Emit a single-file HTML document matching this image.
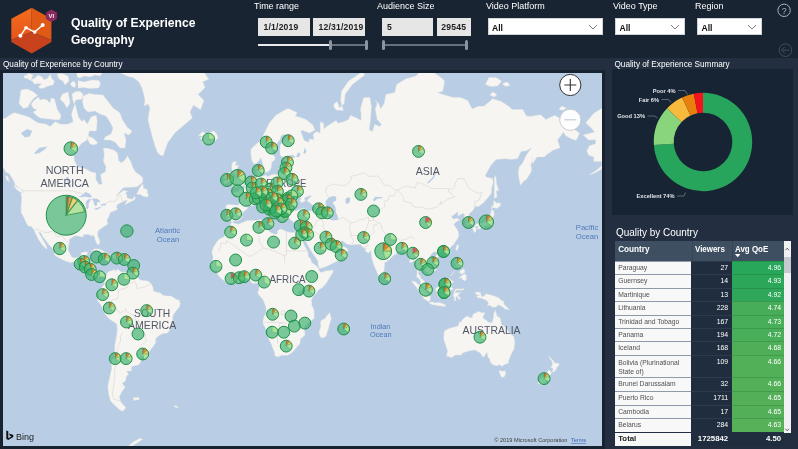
<!DOCTYPE html>
<html lang="en">
<head>
<meta charset="utf-8">
<title>Quality of Experience Geography</title>
<style>
*{box-sizing:border-box;margin:0;padding:0}
html,body{width:798px;height:449px;overflow:hidden;background:#182432}
body{will-change:transform;position:relative;font-family:"Liberation Sans",sans-serif;color:#fff}
.abs{position:absolute}
.t{position:absolute;white-space:nowrap;line-height:1;transform-origin:0 50%}
#strip{left:0;top:58px;width:798px;height:391px;background:#232f41}
#mapframe{left:0;top:70px;width:605px;height:379px;background:#172331}
#map{left:3px;top:73px;width:599px;height:373px;background:#b9cee5;overflow:hidden}
#sumpanel{left:612px;top:69px;width:181px;height:146px;background:#172433}
.lbl{font-size:9.5px;color:#fff;transform:scaleX(.945)}
.box{position:absolute;top:17.5px;height:18px;background:#e6e6e6;color:#222;font-size:8.6px;font-weight:bold;line-height:18px;text-align:center;letter-spacing:.2px}
.dd{position:absolute;top:17.5px;height:17.5px;background:#fff;color:#111;font-size:8.6px;font-weight:bold;line-height:18px;padding-left:3.5px;border:1px solid #cfd3d8}
.dd svg{position:absolute;right:4px;top:4.5px}
table{border-collapse:collapse}
#tbl{left:615.2px;top:240.9px;width:169px}
.row{position:absolute;left:0;width:169px}
.c1{position:absolute;left:0;width:76px;top:0;bottom:0;background:#f8f8f8;color:#505050;font-size:6.75px;padding-left:3px;border-top:1px solid #8f99a7}
.c2{position:absolute;left:76px;width:41px;top:0;bottom:0;background:#202d3f;color:#fff;font-size:6.9px;text-align:right;padding-right:4px;border-top:1px solid #2b3a4d}
.c3{position:absolute;left:117px;width:52px;top:0;bottom:0;color:#fff;font-size:6.9px;text-align:right;padding-right:3px;border-top:1px solid rgba(0,60,20,.18)}
.row div{line-height:12.6px}
</style>
</head>
<body>
<!-- header -->
<svg class="abs" style="left:8px;top:4px" width="54" height="54" viewBox="8 4 54 54">
  <defs><linearGradient id="hl" x1="0" y1="0" x2="0" y2="1"><stop offset="0" stop-color="#f46d1c"/><stop offset="1" stop-color="#e6551b"/></linearGradient></defs>
  <polygon points="11.3,18.7 31.7,7.7 31.7,32.1 11.3,40.1" fill="url(#hl)"/>
  <polygon points="31.7,7.7 51.4,18.7 51.4,40.1 31.7,32.1" fill="#e05a16"/>
  <polygon points="11.3,40.1 31.7,32.1 51.4,40.1 51.4,42.1 31.7,53.4 11.3,42.1" fill="#c8421d"/>
  <polyline points="20.4,35.8 26,27.7 34.7,32.1 42.7,25" fill="none" stroke="#fff" stroke-width="1.4" stroke-linecap="round" stroke-linejoin="round"/>
  <circle cx="20.4" cy="35.8" r="2" fill="#fff"/><circle cx="26" cy="27.7" r="1.8" fill="#fff"/><circle cx="34.7" cy="32.1" r="1.8" fill="#fff"/><circle cx="42.7" cy="25" r="2" fill="#fff"/>
  <polygon points="51.4,9.4 56.9,12.6 56.9,18.9 51.4,22.1 45.9,18.9 45.9,12.6" fill="#8a2a5e"/>
  <text x="51.4" y="17.9" font-family="Liberation Sans, sans-serif" font-size="6" font-weight="bold" fill="#f3e6ee" text-anchor="middle">VI</text>
</svg>
<div class="t" id="title1" style="left:71px;top:15.5px;font-size:13px;font-weight:bold;transform:scaleX(.937)">Quality of Experience</div>
<div class="t" id="title2" style="left:71px;top:32.5px;font-size:13px;font-weight:bold;transform:scaleX(.925)">Geography</div>

<div class="t lbl" id="l1" style="left:253.5px;top:1px">Time range</div>
<div class="box" style="left:257.5px;width:52.5px;text-align:left;padding-left:6px">1/1/2019</div>
<div class="box" style="left:313px;width:52px;text-align:left;padding-left:5.5px">12/31/2019</div>
<div class="abs" style="left:258px;top:44px;width:72px;height:2px;background:#e8eaed"></div>
<div class="abs" style="left:330px;top:44px;width:36px;height:2px;background:#66717f"></div>
<div class="abs" style="left:329px;top:39.8px;width:3px;height:10.5px;background:#8b949f;border-radius:1.5px"></div>
<div class="abs" style="left:364.5px;top:39.8px;width:3px;height:10.5px;background:#8b949f;border-radius:1.5px"></div>

<div class="t lbl" id="l2" style="left:376.5px;top:1px">Audience Size</div>
<div class="box" style="left:381.5px;width:51.5px;text-align:left;padding-left:5.5px">5</div>
<div class="box" style="left:436.5px;width:34.5px">29545</div>
<div class="abs" style="left:383px;top:44px;width:83px;height:2px;background:#66717f"></div>
<div class="abs" style="left:381.5px;top:39.8px;width:3px;height:10.5px;background:#8b949f;border-radius:1.5px"></div>
<div class="abs" style="left:464.5px;top:39.8px;width:3px;height:10.5px;background:#8b949f;border-radius:1.5px"></div>

<div class="t lbl" id="l3" style="left:485.5px;top:1px">Video Platform</div>
<div class="dd" style="left:487.5px;width:115.5px">All<svg width="10" height="8" viewBox="0 0 10 8"><polyline points="1,2 5,6 9,2" fill="none" stroke="#6f6f6f" stroke-width=".9"/></svg></div>
<div class="t lbl" id="l4" style="left:613px;top:1px">Video Type</div>
<div class="dd" style="left:615px;width:69.5px">All<svg width="10" height="8" viewBox="0 0 10 8"><polyline points="1,2 5,6 9,2" fill="none" stroke="#6f6f6f" stroke-width=".9"/></svg></div>
<div class="t lbl" id="l5" style="left:695px;top:1px">Region</div>
<div class="dd" style="left:697px;width:65px">All<svg width="10" height="8" viewBox="0 0 10 8"><polyline points="1,2 5,6 9,2" fill="none" stroke="#6f6f6f" stroke-width=".9"/></svg></div>

<svg class="abs" style="left:775px;top:2px" width="20" height="18" viewBox="0 0 20 18"><circle cx="9.1" cy="8.3" r="6.2" fill="none" stroke="#aab2bb" stroke-width="1"/><text x="9.1" y="11.5" font-family="Liberation Sans, sans-serif" font-size="8.8" fill="#aab2bb" text-anchor="middle">?</text></svg>
<svg class="abs" style="left:776px;top:41px" width="20" height="18" viewBox="0 0 20 18"><circle cx="9.4" cy="9.2" r="6.3" fill="none" stroke="#414d5c" stroke-width="1"/><path d="M13.4 9.2H5.6M8.9 5.8L5.5 9.2l3.4 3.4" fill="none" stroke="#414d5c" stroke-width="1"/></svg>

<!-- body backgrounds -->
<div class="abs" id="strip"></div>
<div class="abs" id="mapframe"></div>
<div class="t" id="s1" style="left:3px;top:60.9px;font-size:8.2px">Quality of Experience by Country</div>
<div class="t" id="s2" style="left:614.5px;top:60.9px;font-size:8.2px">Quality of Experience Summary</div>

<!-- map -->
<svg class="abs" id="map" viewBox="3 73 599 373">
  <rect x="0" y="60" width="620" height="400" fill="#b9cee5"/>
  <path d="M-36.1 107.3L-45.9 113.3L-53.9 122.8L-47.7 128.9L-45.0 132.0L-56.5 135.1L-51.2 140.1L-44.1 139.7L-44.1 143.8L-50.3 145.7L-53.0 151.1L-51.2 155.1L-45.9 156.9L-45.9 161.4L-37.9 161.4L-37.9 165.5L-43.2 170.3L-50.3 174.7L-45.9 173.5L-38.8 169.4L-31.7 163.8L-30.8 158.7L-26.3 153.3L-27.2 159.7L-21.0 156.9L-17.4 153.3L-13.9 156.9L-6.8 158.0L-1.4 162.1L2.1 165.5L5.7 171.9L9.2 173.5L11.0 176.5L14.5 182.4L15.4 186.1L19.9 188.1L23.4 190.8L20.8 192.7L21.7 198.2L21.1 206.2L21.1 212.4L24.3 218.3L25.4 221.0L27.7 225.6L31.6 226.7L33.7 229.7L35.9 234.0L38.2 239.1L42.4 245.1L46.5 249.2L47.2 248.0L44.8 243.1L41.2 237.1L38.2 231.6L41.2 233.0L43.0 237.1L45.6 240.1L48.3 244.1L52.7 248.4L54.5 252.8L54.5 254.7L57.2 257.0L60.7 258.7L64.5 260.7L70.5 262.7L74.1 261.8L78.2 265.0L82.1 266.4L86.2 267.3L86.5 268.6L89.5 271.3L89.5 273.1L91.3 273.5L93.4 275.8L94.7 276.4L97.2 278.0L99.3 277.8L99.8 276.2L100.7 274.9L102.9 276.4L104.3 278.2L104.3 281.2L104.6 283.9L102.5 286.6L101.6 288.3L99.7 289.6L98.2 292.8L98.4 295.1L99.8 296.3L97.5 299.0L98.1 301.7L100.2 303.8L102.5 308.0L104.8 312.5L106.6 316.1L110.5 319.8L114.9 322.6L116.9 324.3L117.3 329.2L116.7 335.0L114.9 344.9L114.8 351.1L113.2 358.6L111.2 362.3L111.7 368.7L110.5 373.4L109.6 378.2L107.8 385.9L108.7 393.9L110.5 401.0L114.9 405.5L119.4 409.5L122.4 411.3L126.1 407.9L121.2 402.5L120.3 400.7L119.4 396.7L122.1 391.2L125.1 387.2L122.1 383.3L125.6 380.7L126.5 375.8L128.6 374.6L126.5 371.0L131.3 371.0L131.5 366.4L138.9 364.8L141.2 360.8L140.2 358.1L138.2 355.7L142.5 357.3L146.9 355.3L149.6 351.1L152.8 346.9L155.6 342.9L155.8 338.5L159.7 335.0L162.9 333.4L167.4 333.0L169.1 331.1L170.9 327.3L172.7 322.6L172.7 317.0L173.6 314.3L176.3 310.7L179.8 306.2L180.2 303.5L179.3 300.3L176.3 299.4L173.6 297.6L170.9 296.0L167.4 296.0L163.3 295.4L160.3 293.1L156.7 292.2L153.2 291.0L153.2 287.8L151.4 283.9L148.7 281.6L146.0 280.7L140.7 280.3L138.0 278.0L135.4 275.8L132.2 273.1L130.9 272.1L127.4 272.8L124.7 272.1L121.2 272.2L120.3 271.0L117.6 269.2L115.3 271.3L114.1 269.2L112.3 270.8L109.1 271.3L107.7 272.6L106.9 274.4L105.2 276.2L104.5 275.5L103.4 274.4L100.7 273.9L98.1 275.3L95.9 274.6L94.5 273.1L93.3 271.3L93.6 268.6L94.0 265.3L94.2 264.0L91.8 262.6L89.2 262.4L85.6 262.7L84.2 262.4L85.3 260.3L85.3 257.5L86.5 255.7L87.8 252.2L85.6 251.7L81.5 252.6L81.0 255.1L79.4 257.5L76.7 257.7L74.1 258.1L71.8 257.0L71.1 256.0L69.1 251.9L68.2 249.9L68.7 245.1L69.3 243.1L69.1 239.5L73.2 236.7L75.3 235.7L79.4 236.3L82.1 236.9L83.5 236.9L83.0 234.7L85.6 234.5L89.2 234.5L91.0 235.9L92.7 235.1L94.9 237.1L95.0 239.5L96.6 243.1L98.1 244.9L99.5 244.1L99.8 241.1L98.8 238.1L97.5 235.1L98.1 230.9L100.7 228.8L103.6 226.7L106.1 225.2L107.8 223.9L106.9 220.1L108.7 216.8L110.5 212.2L114.1 211.0L117.6 209.3L116.4 207.4L117.3 204.5L120.3 203.0L122.9 201.8L124.7 200.8L127.4 200.0L124.7 205.0L129.2 202.3L133.6 200.5L135.4 198.7L134.5 196.1L132.7 199.2L129.2 198.7L126.9 197.4L126.5 194.0L124.7 193.5L127.7 191.4L123.8 190.3L119.4 193.5L115.8 196.7L118.5 193.0L120.3 190.8L123.8 187.5L131.8 187.3L137.2 186.7L140.7 183.9L142.5 182.4L143.0 178.0L139.8 175.0L135.4 171.9L132.7 167.1L130.9 162.1L127.4 155.8L124.7 160.4L121.2 162.8L118.5 160.4L117.6 153.3L114.1 150.3L108.7 148.4L103.4 148.1L104.3 155.1L103.4 161.1L106.1 167.1L105.2 171.9L100.7 174.4L101.6 181.0L102.2 183.9L99.0 184.5L95.8 179.5L95.9 172.9L91.0 171.9L85.6 168.7L77.6 167.1L74.6 161.1L73.7 155.1L76.7 149.6L81.2 143.8L87.4 139.7L89.2 131.1L96.3 131.1L97.2 121.8L96.3 115.3L91.0 116.9L87.4 124.2L83.8 119.4L82.1 121.8L78.5 116.9L75.0 103.4L71.4 114.3L73.2 121.8L67.9 124.2L60.7 124.2L55.4 121.8L50.1 126.6L46.5 124.2L37.6 122.8L28.8 116.9L19.9 114.3L14.5 112.7L11.0 114.3L5.7 117.9L0.3 119.4L-8.6 115.9L-21.0 112.7L-28.1 110.1ZM603.6 107.3L593.8 113.3L585.8 122.8L592.1 128.9L594.7 132.0L583.2 135.1L588.5 140.1L595.6 139.7L595.6 143.8L589.4 145.7L586.7 151.1L588.5 155.1L593.8 156.9L593.8 161.4L601.8 161.4L601.8 165.5L596.5 170.3L589.4 174.7L593.8 173.5L601.0 169.4L608.1 163.8L609.0 158.7L613.4 153.3L612.5 159.7L618.7 156.9L622.3 153.3L625.8 156.9L632.9 158.0L638.3 162.1L641.8 165.5L645.4 171.9L648.9 173.5L650.7 176.5L654.3 182.4L655.2 186.1L659.6 188.1L663.1 190.8L660.5 192.7L661.4 198.2L660.8 206.2L660.8 212.4L664.0 218.3L665.1 221.0L667.4 225.6L671.3 226.7L673.5 229.7L675.6 234.0L677.9 239.1L682.2 245.1L686.2 249.2L687.0 248.0L684.5 243.1L680.9 237.1L677.9 231.6L680.9 233.0L682.7 237.1L685.4 240.1L688.0 244.1L692.5 248.4L694.2 252.8L694.2 254.7L696.9 257.0L700.5 258.7L704.2 260.7L710.2 262.7L713.8 261.8L717.9 265.0L721.8 266.4L725.9 267.3L726.2 268.6L729.3 271.3L729.3 273.1L731.0 273.5L733.2 275.8L734.4 276.4L736.9 278.0L739.0 277.8L739.6 276.2L740.4 274.9L742.6 276.4L744.0 278.2L744.0 281.2L744.4 283.9L742.2 286.6L741.3 288.3L739.4 289.6L738.0 292.8L738.1 295.1L739.6 296.3L737.2 299.0L737.8 301.7L739.9 303.8L742.2 308.0L744.5 312.5L746.3 316.1L750.2 319.8L754.7 322.6L756.6 324.3L757.0 329.2L756.4 335.0L754.7 344.9L754.5 351.1L752.9 358.6L750.9 362.3L751.5 368.7L750.2 373.4L749.3 378.2L747.6 385.9L748.4 393.9L750.2 401.0L754.7 405.5L759.1 409.5L762.1 411.3L765.9 407.9L760.9 402.5L760.0 400.7L759.1 396.7L761.8 391.2L764.8 387.2L761.8 383.3L765.3 380.7L766.2 375.8L768.3 374.6L766.2 371.0L771.0 371.0L771.2 366.4L778.7 364.8L781.0 360.8L779.9 358.1L777.9 355.7L782.2 357.3L786.7 355.3L789.3 351.1L792.5 346.9L795.4 342.9L795.5 338.5L799.4 335.0L802.6 333.4L807.1 333.0L808.9 331.1L810.6 327.3L812.4 322.6L812.4 317.0L813.3 314.3L816.0 310.7L819.5 306.2L819.9 303.5L819.0 300.3L816.0 299.4L813.3 297.6L810.6 296.0L807.1 296.0L803.0 295.4L800.0 293.1L796.4 292.2L792.9 291.0L792.9 287.8L791.1 283.9L788.4 281.6L785.8 280.7L780.4 280.3L777.8 278.0L775.1 275.8L771.9 273.1L770.7 272.1L767.1 272.8L764.4 272.1L760.9 272.2L760.0 271.0L757.3 269.2L755.0 271.3L753.8 269.2L752.0 270.8L748.8 271.3L747.4 272.6L746.7 274.4L744.9 276.2L744.2 275.5L743.1 274.4L740.4 273.9L737.8 275.3L735.7 274.6L734.2 273.1L733.0 271.3L733.3 268.6L733.7 265.3L733.9 264.0L731.6 262.6L728.9 262.4L725.3 262.7L723.9 262.4L725.0 260.3L725.0 257.5L726.2 255.7L727.5 252.2L725.3 251.7L721.3 252.6L720.7 255.1L719.1 257.5L716.5 257.7L713.8 258.1L711.5 257.0L710.8 256.0L708.8 251.9L707.9 249.9L708.5 245.1L709.0 243.1L708.8 239.5L712.9 236.7L715.0 235.7L719.1 236.3L721.8 236.9L723.2 236.9L722.7 234.7L725.3 234.5L728.9 234.5L730.7 235.9L732.5 235.1L734.6 237.1L734.8 239.5L736.4 243.1L737.8 244.9L739.2 244.1L739.6 241.1L738.5 238.1L737.2 235.1L737.8 230.9L740.4 228.8L743.3 226.7L745.8 225.2L747.6 223.9L746.7 220.1L748.4 216.8L750.2 212.2L753.8 211.0L757.3 209.3L756.1 207.4L757.0 204.5L760.0 203.0L762.7 201.8L764.4 200.8L767.1 200.0L764.4 205.0L768.9 202.3L773.3 200.5L775.1 198.7L774.2 196.1L772.4 199.2L768.9 198.7L766.6 197.4L766.2 194.0L764.4 193.5L767.5 191.4L763.5 190.3L759.1 193.5L755.6 196.7L758.2 193.0L760.0 190.8L763.5 187.5L771.5 187.3L776.9 186.7L780.4 183.9L782.2 182.4L782.7 178.0L779.5 175.0L775.1 171.9L772.4 167.1L770.7 162.1L767.1 155.8L764.4 160.4L760.9 162.8L758.2 160.4L757.3 153.3L753.8 150.3L748.4 148.4L743.1 148.1L744.0 155.1L743.1 161.1L745.8 167.1L744.9 171.9L740.4 174.4L741.3 181.0L741.9 183.9L738.7 184.5L735.5 179.5L735.7 172.9L730.7 171.9L725.3 168.7L717.3 167.1L714.3 161.1L713.4 155.1L716.5 149.6L720.9 143.8L727.1 139.7L728.9 131.1L736.0 131.1L736.9 121.8L736.0 115.3L730.7 116.9L727.1 124.2L723.6 119.4L721.8 121.8L718.2 116.9L714.7 103.4L711.1 114.3L712.9 121.8L707.6 124.2L700.5 124.2L695.1 121.8L689.8 126.6L686.2 124.2L677.4 122.8L668.5 116.9L659.6 114.3L654.3 112.7L650.7 114.3L645.4 117.9L640.0 119.4L631.2 115.9L618.7 112.7L611.6 110.1ZM198.5 135.5L202.9 131.6L206.5 134.2L210.0 132.5L213.6 131.1L216.2 133.3L218.0 137.6L215.3 140.9L210.0 143.8L206.5 143.8L202.0 142.6L202.9 139.7L199.4 138.0L202.9 136.4ZM287.8 108.4L291.8 110.1L297.1 112.7L295.3 115.9L300.6 117.4L306.0 119.4L313.1 125.2L314.9 130.2L309.5 132.9L302.4 130.2L300.6 131.1L304.2 140.5L308.6 142.2L309.5 138.9L314.0 139.7L313.1 134.2L316.6 131.6L320.2 133.3L320.2 128.9L320.2 121.8L323.7 123.3L323.7 128.9L327.3 126.1L336.2 120.4L338.0 123.3L343.3 121.8L348.6 119.4L350.4 115.3L356.6 117.9L361.1 120.4L361.1 114.3L360.5 109.0L363.7 97.5L369.9 97.5L371.4 106.2L370.5 119.4L369.1 129.8L372.6 131.6L374.7 124.2L379.7 126.6L381.5 124.2L377.1 119.4L375.3 109.0L377.1 103.4L375.3 100.5L378.8 103.4L380.6 109.0L384.2 103.4L385.9 94.4L394.8 92.5L396.6 84.6L405.5 78.9L416.1 76.0L426.8 64.2L432.1 71.4L441.0 77.5L444.6 81.1L442.8 91.2L437.5 92.5L442.8 94.4L453.5 97.5L460.6 97.5L467.7 100.5L472.1 109.0L478.3 106.2L483.7 106.2L490.8 100.5L492.6 98.7L501.4 101.6L508.6 106.2L512.1 109.5L522.8 109.5L526.3 115.9L529.9 116.4L540.5 114.8L545.9 119.4L554.8 115.3L561.9 119.4L570.7 126.6L579.6 133.3L576.1 140.5L570.7 138.5L565.4 135.5L563.6 132.0L558.3 138.9L557.4 139.7L560.1 147.7L553.0 150.3L547.6 154.0L544.1 156.9L537.0 156.9L532.5 163.8L531.7 158.7L533.4 157.6L530.8 164.5L531.7 170.3L529.9 174.1L526.3 179.5L523.7 181.0L520.5 185.3L519.2 179.5L518.3 173.5L519.2 167.1L522.8 162.8L526.3 155.1L531.7 147.7L526.3 150.7L521.0 151.5L517.4 158.7L510.3 159.4L505.0 158.7L496.1 159.4L490.8 165.5L485.4 175.0L486.3 177.1L492.6 178.6L493.1 182.4L491.7 188.1L491.3 193.5L488.1 197.4L483.7 202.5L478.3 206.7L476.4 206.0L474.3 207.9L472.5 211.0L469.5 213.3L468.6 214.9L471.8 220.1L471.9 223.4L470.3 224.5L466.8 225.8L466.4 223.4L467.1 220.1L464.1 217.9L464.7 214.5L462.9 213.3L458.8 215.6L457.9 216.1L457.9 211.5L453.5 215.2L451.2 216.1L453.3 219.2L456.7 218.3L459.7 219.7L455.8 222.3L453.8 224.5L456.7 228.8L458.4 232.0L458.8 235.1L457.9 238.1L455.2 242.1L453.5 244.7L451.7 246.3L449.0 249.0L444.9 250.3L441.0 251.5L438.4 252.2L438.0 254.1L436.9 251.9L433.9 251.7L431.6 253.8L430.0 256.6L431.3 259.4L434.4 262.2L436.0 266.8L436.2 269.9L432.1 272.4L431.3 274.0L428.6 275.5L428.6 273.1L425.9 272.1L424.1 269.5L421.5 268.1L420.6 266.8L419.7 268.6L418.8 271.3L418.5 274.0L420.2 275.8L420.6 278.2L423.3 280.0L425.7 283.0L425.9 286.0L427.2 288.5L425.7 288.7L422.0 286.0L420.6 283.0L420.2 280.3L418.8 278.5L416.7 276.7L417.0 273.1L417.4 269.5L416.1 265.9L415.4 261.3L414.0 260.5L411.3 262.6L409.6 262.2L409.9 258.5L408.1 255.1L405.5 251.9L404.6 249.9L402.8 250.3L400.2 251.3L396.6 251.9L396.2 254.1L393.0 255.7L389.5 259.4L386.8 261.6L384.5 263.1L384.5 267.3L383.8 271.3L382.9 272.6L382.4 274.4L381.0 275.1L379.7 276.6L377.6 274.0L376.2 270.1L374.9 267.7L373.5 264.0L372.3 260.3L371.4 256.6L371.2 252.8L370.8 250.5L368.2 253.2L364.6 250.3L366.9 249.0L363.7 248.0L361.6 246.1L360.5 244.5L355.7 244.5L351.3 244.9L346.5 244.1L343.6 241.5L342.4 240.7L338.8 241.9L335.3 240.1L332.6 237.5L330.9 234.7L328.9 234.5L327.3 235.5L328.2 238.1L330.9 241.7L331.2 243.7L333.5 243.1L333.0 245.9L335.3 246.7L338.8 246.5L341.5 242.9L342.4 246.1L346.1 247.8L348.3 249.9L346.0 254.0L344.5 256.6L342.4 258.5L339.7 260.3L334.8 262.2L329.1 265.3L322.0 268.1L319.3 268.2L318.1 264.4L317.9 261.3L314.9 256.6L311.7 251.9L308.6 246.7L305.1 240.1L304.0 236.1L303.0 239.1L301.5 238.5L299.9 235.1L299.4 232.6L302.8 232.4L304.2 229.2L305.3 225.6L305.8 222.3L306.3 220.6L303.3 220.6L300.6 222.1L296.4 220.6L293.5 221.9L290.5 220.1L288.7 217.2L289.4 214.9L288.6 213.3L290.0 212.2L293.5 211.0L298.0 210.3L301.5 208.6L304.2 208.4L307.7 210.8L312.5 211.0L315.7 209.8L315.7 206.9L312.5 205.0L308.6 202.0L307.0 200.5L310.4 196.9L311.8 195.6L308.6 196.1L304.2 198.0L305.1 200.5L304.7 201.3L301.5 202.8L299.8 200.3L301.7 198.5L298.0 197.2L296.6 197.4L294.8 200.8L292.8 204.2L291.6 205.7L291.2 207.4L292.1 209.6L293.5 210.5L291.8 211.0L290.0 211.9L288.6 212.6L288.2 211.5L284.6 211.5L284.3 213.3L282.5 212.2L282.3 214.9L284.6 217.9L284.6 218.6L282.9 218.1L283.2 221.2L281.8 221.2L280.6 220.6L279.7 218.3L279.5 216.8L277.5 214.0L276.5 212.2L276.7 209.1L274.9 207.4L270.4 205.0L268.7 202.5L267.8 200.5L266.3 201.3L266.3 199.5L263.9 200.5L264.0 203.0L266.2 205.0L267.2 207.4L270.4 208.9L274.9 212.9L274.9 213.3L272.2 212.2L271.5 214.0L272.4 215.6L271.3 217.2L269.9 218.1L270.4 215.6L269.7 213.3L267.4 211.5L263.9 209.3L261.5 207.4L260.3 205.0L257.8 202.8L255.3 204.2L252.7 206.0L250.5 205.2L247.5 206.0L247.7 207.9L245.9 210.0L243.4 211.7L241.5 214.5L242.4 216.3L240.8 218.8L238.4 220.6L234.2 220.8L232.0 222.3L230.8 220.6L228.9 219.7L226.2 220.1L226.4 216.8L225.1 216.1L226.4 212.2L226.4 208.6L225.5 206.2L227.8 204.5L231.7 204.7L235.8 205.0L238.8 205.2L239.9 202.3L240.0 199.7L238.1 196.1L234.2 194.0L233.5 192.4L236.7 191.4L239.2 191.9L238.8 188.9L239.9 189.7L242.4 189.5L244.7 187.8L244.8 185.6L247.7 184.5L249.1 182.4L250.4 179.5L254.3 178.3L257.1 177.7L257.5 175.0L256.6 171.9L256.6 167.1L260.7 164.8L260.3 168.7L261.2 170.3L259.4 173.5L259.8 175.0L261.5 176.5L263.3 175.9L266.0 175.0L267.4 176.8L271.3 175.0L274.9 174.1L276.7 175.3L277.5 173.8L279.3 172.5L279.3 167.8L280.2 165.5L282.0 164.8L284.6 167.1L285.4 162.8L283.8 159.7L286.4 158.7L291.8 158.7L295.7 156.9L292.6 154.8L286.4 156.2L282.9 157.3L280.2 155.1L279.9 149.6L280.2 144.9L285.5 138.5L287.1 137.2L285.0 134.2L281.1 135.5L279.9 139.7L275.8 144.9L273.1 148.4L272.6 154.4L275.4 157.6L274.0 160.8L271.7 162.1L271.3 167.1L270.4 169.7L267.4 171.9L264.9 172.2L264.9 171.6L264.2 169.4L263.1 164.8L261.7 160.4L260.8 157.6L258.9 160.8L256.2 163.5L253.6 163.5L251.8 160.4L250.9 155.1L250.9 149.6L253.6 146.5L257.1 143.4L260.7 140.5L262.4 137.6L264.2 133.3L266.9 128.0L269.5 122.8L273.1 118.4L275.8 115.3L279.3 113.3L282.9 111.1ZM299.9 235.1L299.4 232.6L297.1 232.0L295.3 232.4L290.0 232.4L286.4 231.6L282.9 229.7L280.2 229.0L277.5 230.9L277.5 233.4L276.7 234.3L274.0 234.0L269.5 232.0L268.7 230.1L265.1 229.0L261.9 228.4L260.1 226.7L261.2 223.4L261.5 220.1L259.8 219.5L256.2 220.4L250.9 220.6L247.3 220.6L242.0 222.8L238.4 224.3L236.7 223.9L232.6 222.6L231.3 222.8L229.9 226.7L226.9 228.2L224.6 232.0L224.8 235.1L223.9 237.1L219.3 239.1L216.2 242.7L213.6 247.0L211.8 252.8L213.0 256.6L212.7 262.2L210.9 264.6L212.3 267.7L212.3 269.0L215.3 271.3L217.7 274.0L218.5 275.8L221.6 278.9L226.0 282.1L228.7 283.2L233.1 281.9L236.7 281.9L238.4 282.6L243.8 280.5L246.4 279.8L250.0 279.8L251.8 283.0L252.7 283.4L256.7 283.0L258.9 284.2L259.4 287.4L258.9 289.2L258.5 291.0L257.6 292.2L258.9 294.9L261.5 297.9L263.3 299.9L263.9 301.7L265.6 306.2L266.5 310.3L265.8 313.4L263.9 317.0L263.0 320.7L263.0 323.5L265.5 328.2L267.8 332.4L268.7 338.9L271.3 343.9L272.7 348.0L274.5 352.1L274.7 355.3L277.5 357.0L282.0 355.3L287.7 355.3L291.8 352.8L296.2 348.0L297.1 346.5L299.8 343.9L300.5 338.9L305.1 335.0L304.2 329.2L304.2 327.3L307.4 323.5L311.3 320.7L314.3 318.0L314.1 313.4L314.0 309.8L311.8 305.3L311.8 303.1L311.3 299.9L312.5 298.1L313.4 296.0L315.7 294.0L318.4 290.1L322.5 287.4L326.4 283.0L329.1 278.5L331.7 274.0L333.0 272.4L333.2 269.9L330.9 270.4L325.5 271.0L321.1 272.4L318.8 270.4L318.8 268.2L316.6 266.2L313.1 263.5L311.8 262.6L310.4 258.5L308.3 256.6L308.1 252.8L307.6 250.9L305.3 247.2L304.2 245.1L302.4 241.1L301.5 239.1ZM329.6 312.5L331.4 318.9L330.5 320.7L329.8 323.5L328.2 329.2L325.9 336.5L322.3 337.9L320.2 336.9L318.9 332.1L320.7 327.3L320.5 321.7L322.0 319.8L324.6 318.9L327.3 315.2ZM231.9 187.8L235.8 187.3L238.4 186.4L242.5 185.9L244.5 184.7L243.1 183.9L245.0 180.7L242.5 179.5L242.0 177.7L239.9 174.7L239.2 171.6L238.3 170.3L236.1 170.3L238.8 165.5L234.9 165.2L236.7 161.8L233.1 161.8L231.7 165.5L231.9 168.7L232.2 172.2L233.5 171.9L233.3 174.4L236.1 173.8L235.8 175.9L236.7 178.3L233.8 178.6L234.4 181.0L232.8 182.7L236.3 183.9L234.5 184.7ZM230.8 181.9L231.3 178.6L232.2 175.0L231.0 172.9L228.7 172.5L226.9 175.0L224.2 175.9L224.2 178.3L226.0 178.9L223.7 182.2L224.6 183.9L227.4 183.0ZM493.4 210.0L494.3 214.5L492.6 217.9L492.4 222.3L490.8 224.5L489.0 225.0L485.4 225.4L483.1 227.8L481.9 225.4L477.5 226.3L474.8 226.7L474.8 225.6L477.5 223.4L482.8 223.2L484.9 221.2L486.0 219.0L488.1 219.5L489.9 216.8L490.8 213.3L491.3 210.5ZM474.8 226.9L476.6 228.8L475.7 232.0L474.1 232.6L473.4 229.9L472.5 228.4L473.9 227.1ZM480.1 226.0L481.4 227.1L480.5 228.2L478.3 229.2L477.5 227.8L478.3 226.7ZM491.3 209.8L492.6 207.4L496.6 208.6L500.6 205.7L500.2 203.0L496.1 203.0L494.0 200.3L493.4 205.0L491.3 207.4ZM494.3 198.7L497.0 196.7L496.1 190.8L498.8 190.8L496.6 183.9L496.1 178.0L495.2 175.6L494.3 178.0L494.3 185.3L494.3 193.5ZM457.9 244.5L458.8 246.1L457.0 250.9L455.6 249.0L457.0 245.1ZM438.9 254.7L438.4 257.0L436.6 258.1L435.2 256.6L436.6 254.7ZM384.2 273.5L386.5 275.8L387.4 278.5L385.9 280.1L384.2 280.3L383.8 276.7ZM411.3 281.0L415.3 281.7L419.7 285.7L421.5 287.4L425.9 291.0L427.7 294.6L430.4 296.3L430.0 301.3L427.7 301.3L423.3 298.1L420.6 293.7L417.9 289.2L414.4 284.8ZM428.9 303.1L431.8 301.7L434.8 302.9L439.2 302.6L442.3 303.5L445.5 304.9L445.3 306.5L439.2 305.8L433.9 304.9L431.3 304.2ZM435.7 288.3L436.9 287.4L439.8 286.6L442.8 285.3L444.6 283.0L447.2 281.2L449.6 278.5L451.2 280.3L453.8 281.7L451.7 283.4L451.3 286.6L453.5 289.2L450.8 290.1L450.8 292.8L449.0 295.4L448.1 298.1L445.5 298.1L442.8 296.7L440.1 296.9L437.8 296.0L437.5 293.3L435.7 290.5ZM454.9 289.8L456.7 288.7L460.6 289.2L464.1 288.2L463.2 290.1L460.6 290.3L456.1 290.3L455.2 292.4L457.9 292.8L461.1 292.4L458.8 294.2L457.9 295.4L459.7 297.2L460.6 299.0L458.8 299.5L457.6 297.2L456.7 296.0L455.8 297.2L456.0 300.8L454.4 300.8L454.4 297.2L453.1 296.0L454.0 293.3ZM474.8 292.4L478.3 291.9L480.5 292.4L481.0 295.4L482.8 296.9L486.3 293.8L492.6 295.6L498.8 297.8L501.4 300.4L504.5 301.7L503.2 303.1L505.0 305.3L509.4 309.8L505.0 308.9L502.3 306.7L498.8 304.7L497.0 305.8L496.1 307.1L492.6 307.2L489.9 305.3L487.2 305.8L488.5 303.5L487.2 300.8L482.8 298.8L479.2 297.8L478.0 298.1L476.6 296.0L479.8 295.1L476.6 294.6ZM456.1 257.5L459.1 257.7L459.1 261.3L457.9 263.1L458.3 265.5L461.5 266.2L462.3 268.4L460.6 267.2L457.9 266.4L456.3 265.3L455.6 264.0L455.1 261.6L456.0 260.3ZM458.8 278.5L461.5 275.7L464.8 273.7L466.4 275.8L466.4 279.4L465.0 280.9L462.3 279.4L461.5 277.6ZM460.6 270.4L464.1 269.0L465.0 272.2L461.5 274.0L459.3 272.2ZM450.3 276.0L451.7 274.9L454.4 271.0L453.8 272.6L451.3 276.0ZM495.2 310.1L497.0 316.1L500.2 318.0L501.4 324.5L505.9 327.3L508.6 331.7L513.9 336.9L514.8 342.9L513.9 349.0L511.2 354.2L508.6 360.8L508.6 363.0L503.2 365.2L502.0 366.6L499.1 364.6L497.0 365.9L492.6 364.6L490.2 361.9L489.9 359.2L488.1 357.5L486.9 352.3L483.7 357.0L482.8 357.0L480.1 352.8L474.8 350.0L471.2 350.4L465.9 351.7L462.3 353.2L461.5 355.1L455.2 355.1L451.7 357.5L446.5 356.0L447.6 351.1L446.4 346.9L444.6 341.9L443.7 338.9L444.0 335.0L444.0 332.1L444.9 330.7L449.6 328.2L453.5 327.3L457.9 326.3L459.1 323.5L459.3 321.7L461.5 322.2L461.8 320.2L464.1 318.0L467.3 316.1L469.5 317.6L472.1 317.8L472.5 315.2L474.4 313.2L477.5 312.5L477.6 311.2L481.9 312.8L485.1 312.8L483.7 315.2L482.8 318.0L485.4 319.8L489.0 322.6L492.2 322.6L493.4 318.0L493.8 313.4ZM499.1 370.5L502.3 371.2L505.5 370.8L505.4 374.6L504.1 377.0L501.4 377.3L500.2 374.6ZM548.9 356.2L551.7 359.2L553.9 361.4L554.8 363.2L558.3 363.2L559.2 363.4L558.1 366.8L556.5 367.3L556.4 369.1L553.5 372.4L552.4 371.7L553.3 369.1L550.8 367.1L552.3 365.2L552.4 361.9L549.4 357.9ZM548.9 369.8L551.7 372.7L549.4 375.8L548.9 377.8L546.4 379.0L545.5 383.0L542.3 384.8L537.9 383.3L540.5 378.2L545.0 375.8L546.8 372.9ZM91.0 251.1L94.5 249.0L97.2 248.8L99.8 249.2L104.3 251.5L107.8 253.4L110.1 254.3L108.7 254.9L103.9 255.1L103.4 253.4L101.6 251.9L96.3 250.1L93.6 250.5ZM109.8 257.7L113.2 258.1L114.6 259.0L117.6 257.7L120.5 257.4L118.5 256.0L117.6 255.3L114.6 254.9L112.3 254.9L111.6 255.5L113.2 256.6L113.3 257.4ZM102.9 257.7L105.2 257.5L106.6 258.5L104.8 258.8L102.9 258.1ZM122.6 257.5L125.3 257.7L125.1 258.5L122.6 258.5ZM136.6 194.3L140.7 194.6L143.4 196.4L147.8 196.9L148.4 194.6L146.9 192.2L147.8 190.0L143.4 188.1L143.0 183.9L140.7 186.1L138.9 189.5ZM333.5 106.2L336.2 110.1L343.3 110.6L340.6 100.5L341.5 91.2L348.6 81.1L362.8 71.4L364.6 75.2L352.2 84.6L345.1 94.4L344.2 103.4L339.7 107.9L337.1 101.6L334.4 103.4ZM485.4 84.6L489.0 77.5L496.1 77.5L501.4 81.1L497.9 85.9L490.8 86.6ZM489.9 95.0L492.6 91.9L497.0 94.4L494.3 96.9ZM502.3 83.9L506.8 81.8L510.3 85.2L505.9 86.6ZM559.2 108.4L561.9 106.2L566.3 107.9L563.6 110.1L560.1 110.1ZM412.6 47.9L419.7 47.9L428.6 59.0L419.7 62.5L414.4 57.3ZM261.5 52.7L266.9 67.4L272.2 73.0L279.3 65.8L284.6 66.6L281.1 47.9ZM22.9 192.4L19.9 191.9L16.9 189.7L13.8 186.1L16.3 185.6L19.3 187.5L22.0 190.0ZM5.7 175.9L8.0 176.5L9.2 181.9L6.5 179.5ZM133.6 397.5L138.9 397.5L139.3 399.6L133.6 400.4ZM174.5 405.5L178.0 406.4L178.0 407.9L174.5 406.7ZM21.0 90.0L27.0 89.0L33.0 91.5L37.6 95.6L34.0 98.0L30.0 103.0L28.0 107.0L23.5 108.6L19.0 103.6L20.0 97.0ZM31.0 104.0L34.5 100.0L38.5 97.0L40.0 100.0L44.0 99.0L47.0 100.0L50.0 103.0L51.0 98.0L54.5 99.0L56.0 105.0L57.5 110.0L61.0 115.0L60.0 119.5L56.0 120.0L50.0 119.0L44.0 118.5L40.0 118.0L36.0 115.0L33.0 112.0L37.0 110.0L33.0 108.0ZM60.0 99.0L62.5 94.0L68.0 92.0L69.0 97.0L70.0 103.0L67.0 108.0L64.0 103.0ZM72.0 94.0L76.0 91.5L80.0 91.5L83.0 94.0L82.0 99.0L76.0 100.0L74.0 104.0L72.5 99.0ZM24.0 76.0L29.0 73.5L33.0 75.0L31.0 80.0L35.0 78.0L38.0 75.0L42.0 77.0L44.0 80.0L48.0 78.0L50.0 74.0L52.0 79.0L54.5 81.0L53.0 85.0L48.0 86.0L44.0 88.0L40.0 88.5L38.5 86.5L42.0 84.0L38.0 83.5L34.0 84.0L33.0 81.5L30.0 80.0L27.0 78.5L24.0 78.0ZM57.0 74.0L62.0 73.5L68.0 76.0L69.0 81.0L65.0 85.0L63.0 81.0L59.0 79.0ZM70.5 83.0L74.0 81.0L76.0 85.0L74.5 87.5L71.5 86.0ZM77.0 72.0L103.0 72.0L100.0 76.0L95.0 75.0L90.0 77.0L84.0 76.0L80.0 78.0L77.0 77.0ZM78.0 80.5L84.0 82.0L92.0 80.0L99.0 80.5L100.5 84.0L98.5 88.0L90.0 88.5L84.0 87.5L78.0 88.0ZM83.0 96.0L89.0 93.5L95.0 94.5L103.0 95.0L106.0 99.0L110.0 104.0L113.0 108.0L120.0 113.0L122.0 119.0L127.0 127.0L132.0 131.0L129.0 135.0L124.0 133.0L126.0 140.0L125.0 148.0L120.0 148.0L115.0 142.0L110.0 140.0L104.0 140.0L105.0 137.0L111.0 134.0L113.0 128.0L110.0 122.0L106.0 116.0L100.0 114.0L95.0 111.0L88.0 112.0L84.0 108.0L82.5 102.0ZM88.0 136.0L93.0 138.0L98.0 143.0L94.0 145.0L90.0 144.0L88.0 140.0ZM118.6 72.0L127.0 76.0L134.0 78.0L139.0 82.0L142.0 88.0L144.0 95.0L145.0 101.0L144.0 106.0L148.0 104.0L150.0 108.0L149.0 113.0L148.0 120.0L150.0 128.0L152.6 137.8L155.0 146.0L157.3 151.8L160.0 155.0L163.1 155.8L165.0 150.0L167.8 142.4L174.8 133.0L184.0 125.0L192.3 118.0L190.0 112.0L193.5 105.0L200.5 109.7L204.0 100.4L198.0 94.5L205.0 87.5L202.8 81.7L208.7 79.3L204.0 72.0ZM128.6 446.0L134.0 441.5L140.2 438.2L142.6 439.3L137.0 443.0L132.0 446.0Z" fill="#f7f5f2" stroke="#e6e3dc" stroke-width=".4" stroke-linejoin="round"/>
  <path d="M78.5 196.9L81.2 195.4L83.8 193.5L85.6 191.9L89.2 193.5L91.3 195.4L91.8 197.4L88.3 197.4L85.6 196.4L82.1 197.2ZM86.0 208.6L87.4 209.3L88.6 207.4L88.6 203.8L90.1 200.8L91.3 199.2L89.2 199.0L87.4 200.0L85.6 202.3L86.3 205.0ZM91.5 199.0L93.6 198.5L97.2 198.7L99.8 200.5L99.8 202.5L97.5 201.8L96.8 205.5L95.4 206.2L94.0 203.8L93.6 201.3ZM93.8 209.3L97.2 209.8L101.6 206.9L101.6 206.4L99.0 207.2L95.4 208.4L94.2 208.4ZM100.2 205.5L105.2 205.5L106.6 203.8L104.3 203.5L101.1 204.2ZM66.1 177.1L68.2 176.8L70.9 185.3L70.0 187.0L67.0 181.0ZM20.8 133.3L27.0 128.9L32.3 131.1L29.6 136.4L25.2 137.6ZM34.1 153.3L39.4 147.7L47.4 146.5L44.8 149.6L40.3 152.6L35.9 154.0ZM298.3 291.9L300.6 290.3L302.8 291.5L302.1 295.1L298.9 295.6ZM426.5 183.6L429.5 182.4L433.9 178.0L437.1 171.3L436.0 171.3L432.1 178.0L428.6 181.0ZM345.6 199.2L347.7 197.2L350.4 198.0L349.5 202.5L346.8 204.2L345.6 202.5ZM372.6 200.0L375.3 196.7L382.4 197.2L382.4 198.2L377.1 198.7L374.4 201.3ZM296.2 156.9L298.0 152.6L300.3 153.3L299.8 156.2L298.0 157.3ZM303.3 153.3L304.7 147.7L306.5 151.1L305.1 153.7ZM326.4 206.2L328.2 209.1L330.0 212.2L329.1 215.6L329.1 219.0L332.6 220.6L338.0 220.1L337.6 215.6L336.2 213.3L335.8 209.8L335.3 206.7L332.6 202.5L336.2 200.5L336.2 196.7L332.6 196.1L329.1 197.4L326.4 200.0L325.2 202.5Z" fill="#b9cee5"/>
  <path d="M23.4 190.8L72.8 190.8L73.9 191.6L78.5 192.7L83.0 193.5M106.1 203.3L109.3 201.3L114.9 201.3L117.1 199.0L119.0 195.1L121.2 195.4L121.5 199.5L122.9 201.3M33.9 229.9L38.2 229.5L44.8 232.4L49.7 232.4L49.7 231.3L52.7 231.3L56.3 235.9L59.0 237.1L60.2 235.3L62.5 235.9L65.2 240.1L69.3 243.3M329.1 198.0L325.5 192.2L326.4 187.5L332.6 183.9L339.7 185.3L346.0 185.3L351.3 179.5L350.4 176.5L357.5 175.0L364.6 172.5L368.2 175.9L372.6 176.5L377.9 175.9L380.3 178.6L384.2 185.3L389.5 185.3L393.9 189.2L397.1 190.3M397.1 190.3L405.5 185.9L415.3 188.1L417.0 182.4L423.3 184.2L432.1 188.6L442.8 188.6L449.4 188.6L451.3 189.5L454.4 187.3L456.1 181.0L457.9 178.6L464.1 178.9L468.6 188.1L473.9 191.4L478.3 193.5L481.9 192.4L479.2 200.0L474.8 201.3L474.8 206.2L474.1 207.7M398.0 190.3L403.7 197.4L403.7 200.8L411.7 203.3L413.5 206.9L421.5 207.4L428.6 209.3L437.5 206.9L441.0 201.3L440.7 204.5L448.1 198.7L454.9 196.9L451.7 193.5L448.1 191.4L449.4 188.6M373.5 220.1L380.6 223.4L382.4 229.9L385.9 234.7L391.3 237.5L398.4 239.3L400.2 240.5L405.5 239.5L410.8 236.7L414.9 238.7M363.2 247.6L368.2 245.9L366.4 239.5L371.7 235.1L374.4 232.0L373.5 228.8L373.5 225.2L378.8 223.4M397.1 190.3L393.9 196.1L389.5 195.6L388.2 200.0L384.2 201.3L384.7 206.7L380.6 209.8L373.1 214.2L373.5 220.1M286.4 231.8L286.4 254.7L284.6 255.7L284.6 262.7M286.4 250.9L307.6 250.9M258.9 234.7L259.6 242.1L263.3 248.0L268.7 249.0L284.6 255.7M226.5 240.5L233.5 245.1L244.1 252.8L247.7 255.7L249.5 256.2L252.3 255.7L263.3 248.0M218.9 252.2L218.9 249.0L220.7 248.0L220.7 243.1L226.5 243.1L226.5 240.5M150.3 283.9L145.2 286.9L141.6 287.6L137.2 288.7L135.4 281.7L128.3 283.9L127.4 287.4L122.9 288.9L117.6 290.1L118.5 292.8L117.6 298.5L112.3 299.9L110.5 304.0L112.6 307.8L116.7 308.0L116.5 310.7L118.5 310.7L119.9 313.4L126.0 308.9L126.0 311.6L134.5 315.6L135.4 320.2L138.4 320.4L139.8 323.5L138.9 327.3L139.3 331.1L143.0 331.7L145.5 335.0L145.0 338.1L146.6 340.9L142.8 343.5L139.6 347.3L147.1 354.7M122.9 332.6L120.3 335.9L120.6 340.9L118.0 346.9L116.7 353.2L117.6 357.5L115.8 364.1L114.6 371.0L114.6 378.2L113.5 385.9L112.3 393.9L114.1 399.6L120.1 400.7M277.5 343.9L277.5 331.1L279.3 331.1L279.3 324.1L283.8 322.8L287.0 323.2M263.3 322.0L266.9 322.4L274.9 322.4L283.8 322.8M281.1 314.3L284.6 314.3L284.6 310.7L281.4 311.0L281.1 314.3M302.4 232.4L304.2 236.1L306.0 236.7L308.6 235.1L309.5 234.0L307.7 232.0L311.3 230.7L311.7 230.3L310.9 228.0L314.9 225.8L317.3 219.9L321.6 219.7L323.7 224.1L322.9 226.7L324.1 228.8L326.9 233.0L327.3 235.1M311.7 230.3L316.6 232.8L321.4 236.7L324.6 236.9L326.8 238.1M321.6 219.7L320.2 214.7L321.6 214.0L324.1 215.9L327.3 214.2L328.9 217.0M337.8 219.5L343.3 217.4L350.8 223.2L349.5 226.7L350.4 232.2L351.8 233.0L350.2 235.5L354.0 240.7L351.5 244.7M350.8 223.2L356.6 221.7L360.2 219.2L362.8 220.1L368.2 217.0L369.1 220.8L373.5 220.1M350.2 235.5L359.8 235.5L365.1 231.1L366.4 228.2L369.1 220.8" fill="none" stroke="#d4d1cb" stroke-width=".55" stroke-linejoin="round"/>
  <g font-family="Liberation Sans, sans-serif" fill="#505766" text-anchor="middle" font-size="11">
    <text x="64.7" y="173.8" textLength="38" lengthAdjust="spacingAndGlyphs">NORTH</text><text x="64.7" y="186.9" textLength="48.4" lengthAdjust="spacingAndGlyphs">AMERICA</text>
    <text x="152.1" y="316.5" textLength="36" lengthAdjust="spacingAndGlyphs">SOUTH</text><text x="152.1" y="328.8" textLength="48.2" lengthAdjust="spacingAndGlyphs">AMERICA</text>
    <text x="286.3" y="187" textLength="40" lengthAdjust="spacingAndGlyphs">EUROPE</text>
    <text x="287.6" y="282.7" textLength="36.1" lengthAdjust="spacingAndGlyphs">AFRICA</text>
    <text x="427.8" y="175.3" textLength="24" lengthAdjust="spacingAndGlyphs">ASIA</text>
    <text x="491.6" y="333.9" textLength="58" lengthAdjust="spacingAndGlyphs">AUSTRALIA</text>
  </g>
  <g font-family="Liberation Sans, sans-serif" fill="#4f78b8" text-anchor="middle" font-size="7.6">
    <text x="167.5" y="233">Atlantic</text><text x="168" y="241.5">Ocean</text>
    <text x="380.5" y="329.3" font-size="7.3">Indian</text><text x="380.8" y="336.9" font-size="7.3">Ocean</text>
    <text x="587" y="230">Pacific</text><text x="587" y="238.5">Ocean</text>
  </g>
  <g><defs><g id="p0"><circle r="6" fill="#39b06b" fill-opacity=".66" stroke="#1f8f46" stroke-width="1" vector-effect="non-scaling-stroke"/></g><g id="p1"><circle r="6" fill="#39b06b" fill-opacity=".66" stroke="#1f8f46" stroke-width="1" vector-effect="non-scaling-stroke"/><g stroke="#2a8f4a" stroke-width=".35" stroke-opacity=".7" vector-effect="non-scaling-stroke"><path d="M0.0 0.0L0.0 -5.6A5.6 5.6 0 0 1 1.2 -5.5Z" fill="#e2453c"/><path d="M0.0 0.0L1.2 -5.5A5.6 5.6 0 0 1 3.2 -4.6Z" fill="#e8842a"/><path d="M0.0 0.0L3.2 -4.6A5.6 5.6 0 0 1 4.9 -2.6Z" fill="#f4c55c"/><path d="M0.0 0.0L4.9 -2.6A5.6 5.6 0 0 1 4.6 3.2Z" fill="#aae19b"/></g></g><g id="p2"><circle r="6" fill="#39b06b" fill-opacity=".66" stroke="#1f8f46" stroke-width="1" vector-effect="non-scaling-stroke"/><g stroke="#2a8f4a" stroke-width=".35" stroke-opacity=".7" vector-effect="non-scaling-stroke"><path d="M0.0 0.0L0.0 -5.6A5.6 5.6 0 0 1 4.6 -3.2Z" fill="#ec4a5c"/><path d="M0.0 0.0L4.6 -3.2A5.6 5.6 0 0 1 5.4 -1.4Z" fill="#e8842a"/><path d="M0.0 0.0L5.4 -1.4A5.6 5.6 0 0 1 5.6 0.5Z" fill="#f4c55c"/><path d="M0.0 0.0L5.6 0.5A5.6 5.6 0 0 1 3.6 4.3Z" fill="#aae19b"/></g></g><g id="p3"><circle r="6" fill="#39b06b" fill-opacity=".66" stroke="#1f8f46" stroke-width="1" vector-effect="non-scaling-stroke"/><g stroke="#2a8f4a" stroke-width=".35" stroke-opacity=".7" vector-effect="non-scaling-stroke"><path d="M0.0 0.0L0.0 -5.6A5.6 5.6 0 0 1 5.6 0.5Z" fill="#aae19b"/></g></g><g id="p4"><circle r="6" fill="#39b06b" fill-opacity=".66" stroke="#1f8f46" stroke-width="1" vector-effect="non-scaling-stroke"/><g stroke="#2a8f4a" stroke-width=".35" stroke-opacity=".7" vector-effect="non-scaling-stroke"><path d="M0.0 0.0L0.0 -5.6A5.6 5.6 0 0 1 4.6 3.2Z" fill="#aae19b"/></g></g><g id="p5"><circle r="6" fill="#39b06b" fill-opacity=".66" stroke="#1f8f46" stroke-width="1" vector-effect="non-scaling-stroke"/><g stroke="#2a8f4a" stroke-width=".35" stroke-opacity=".7" vector-effect="non-scaling-stroke"><path d="M0.0 0.0L0.0 -5.6A5.6 5.6 0 0 1 1.4 -5.4Z" fill="#e2453c"/><path d="M0.0 0.0L1.4 -5.4A5.6 5.6 0 0 1 4.3 -3.6Z" fill="#e8842a"/><path d="M0.0 0.0L4.3 -3.6A5.6 5.6 0 0 1 5.6 -0.0Z" fill="#f4c55c"/><path d="M0.0 0.0L5.6 -0.0A5.6 5.6 0 0 1 1.4 5.4Z" fill="#aae19b"/></g></g><g id="p9"><circle r="6" fill="#39b06b" fill-opacity=".66" stroke="#1f8f46" stroke-width="1" vector-effect="non-scaling-stroke"/><g stroke="#2a8f4a" stroke-width=".35" stroke-opacity=".7" vector-effect="non-scaling-stroke"><path d="M0.0 0.0L0.0 -5.6A5.6 5.6 0 0 1 0.7 -5.6Z" fill="#e4505a"/><path d="M0.0 0.0L0.7 -5.6A5.6 5.6 0 0 1 1.9 -5.3Z" fill="#eb9a44"/><path d="M0.0 0.0L1.9 -5.3A5.6 5.6 0 0 1 3.4 -4.4Z" fill="#f5cf78"/><path d="M0.0 0.0L3.4 -4.4A5.6 5.6 0 0 1 5.5 -1.0Z" fill="#b4e2a0"/></g></g></defs><use href="#p9" transform="translate(66.2 215.2) scale(3.33)"/><use href="#p1" transform="translate(70.8 148.6) scale(1.13)"/><use href="#p0" transform="translate(126.9 231.0) scale(1.03)"/><use href="#p1" transform="translate(59.7 248.5) scale(1.03)"/><use href="#p0" transform="translate(96.6 257.1) scale(0.992)"/><use href="#p1" transform="translate(104.2 259.1) scale(0.992)"/><use href="#p1" transform="translate(116.8 258.1) scale(0.992)"/><use href="#p1" transform="translate(124.3 259.5) scale(0.992)"/><use href="#p0" transform="translate(133.7 265.5) scale(0.992)"/><use href="#p1" transform="translate(132.9 273.1) scale(0.992)"/><use href="#p3" transform="translate(123.9 279.3) scale(0.992)"/><use href="#p1" transform="translate(83.8 261.5) scale(0.992)"/><use href="#p1" transform="translate(80.2 264.1) scale(0.992)"/><use href="#p1" transform="translate(85.2 267.1) scale(0.992)"/><use href="#p1" transform="translate(90.2 269.1) scale(0.992)"/><use href="#p1" transform="translate(91.6 274.5) scale(0.992)"/><use href="#p3" transform="translate(99.6 276.7) scale(0.992)"/><use href="#p1" transform="translate(111.8 284.8) scale(0.992)"/><use href="#p1" transform="translate(102.6 294.6) scale(0.992)"/><use href="#p1" transform="translate(109.3 308.0) scale(0.992)"/><use href="#p1" transform="translate(146.7 310.6) scale(0.992)"/><use href="#p1" transform="translate(126.5 322.0) scale(0.992)"/><use href="#p0" transform="translate(138.0 334.0) scale(0.992)"/><use href="#p1" transform="translate(115.2 358.6) scale(0.992)"/><use href="#p1" transform="translate(126.1 358.6) scale(0.992)"/><use href="#p5" transform="translate(142.7 354.0) scale(0.992)"/><use href="#p3" transform="translate(208.6 139.1) scale(0.992)"/><use href="#p1" transform="translate(266.2 142.1) scale(0.992)"/><use href="#p1" transform="translate(271.6 148.1) scale(0.992)"/><use href="#p1" transform="translate(288.2 140.7) scale(0.992)"/><use href="#p1" transform="translate(258.2 170.5) scale(0.992)"/><use href="#p1" transform="translate(287.4 162.3) scale(0.992)"/><use href="#p1" transform="translate(285.9 168.0) scale(0.992)"/><use href="#p1" transform="translate(284.2 173.5) scale(0.992)"/><use href="#p1" transform="translate(292.0 179.3) scale(0.992)"/><use href="#p1" transform="translate(227.0 180.0) scale(1.08)"/><use href="#p1" transform="translate(237.6 177.5) scale(1.33)"/><use href="#p0" transform="translate(237.6 191.0) scale(0.992)"/><use href="#p1" transform="translate(251.1 182.0) scale(0.992)"/><use href="#p1" transform="translate(252.1 188.0) scale(0.992)"/><use href="#p1" transform="translate(261.1 184.0) scale(0.992)"/><use href="#p1" transform="translate(246.1 199.2) scale(1.17)"/><use href="#p1" transform="translate(255.1 198.8) scale(0.992)"/><use href="#p1" transform="translate(258.1 198.0) scale(0.992)"/><use href="#p1" transform="translate(270.1 189.0) scale(0.992)"/><use href="#p1" transform="translate(277.0 183.0) scale(0.992)"/><use href="#p1" transform="translate(277.4 191.5) scale(0.992)"/><use href="#p1" transform="translate(267.1 194.5) scale(0.992)"/><use href="#p1" transform="translate(274.3 202.0) scale(0.992)"/><use href="#p1" transform="translate(280.4 201.0) scale(0.992)"/><use href="#p1" transform="translate(288.2 198.0) scale(0.992)"/><use href="#p1" transform="translate(297.4 191.4) scale(0.992)"/><use href="#p3" transform="translate(291.8 195.9) scale(0.992)"/><use href="#p1" transform="translate(287.3 200.4) scale(0.992)"/><use href="#p1" transform="translate(263.3 195.1) scale(0.992)"/><use href="#p1" transform="translate(226.8 215.3) scale(0.992)"/><use href="#p1" transform="translate(235.6 213.8) scale(0.992)"/><use href="#p1" transform="translate(262.6 207.0) scale(0.992)"/><use href="#p1" transform="translate(273.2 204.0) scale(0.992)"/><use href="#p1" transform="translate(277.7 210.0) scale(0.992)"/><use href="#p1" transform="translate(282.2 216.5) scale(0.992)"/><use href="#p1" transform="translate(280.7 205.0) scale(0.992)"/><use href="#p1" transform="translate(288.2 207.5) scale(0.992)"/><use href="#p1" transform="translate(268.6 201.0) scale(0.992)"/><use href="#p1" transform="translate(271.0 208.0) scale(0.992)"/><use href="#p1" transform="translate(284.0 211.0) scale(0.992)"/><use href="#p1" transform="translate(258.9 227.3) scale(0.992)"/><use href="#p1" transform="translate(267.9 223.6) scale(0.992)"/><use href="#p1" transform="translate(269.4 209.3) scale(0.992)"/><use href="#p1" transform="translate(274.7 213.0) scale(0.992)"/><use href="#p1" transform="translate(278.4 206.3) scale(0.992)"/><use href="#p1" transform="translate(285.2 211.5) scale(0.992)"/><use href="#p1" transform="translate(291.2 204.0) scale(0.992)"/><use href="#p1" transform="translate(276.2 199.5) scale(0.992)"/><use href="#p1" transform="translate(265.0 199.0) scale(0.992)"/><use href="#p1" transform="translate(270.0 203.5) scale(0.992)"/><use href="#p1" transform="translate(274.0 207.0) scale(0.992)"/><use href="#p1" transform="translate(278.0 203.0) scale(0.992)"/><use href="#p1" transform="translate(272.0 198.0) scale(0.992)"/><use href="#p1" transform="translate(266.0 205.0) scale(0.992)"/><use href="#p1" transform="translate(281.0 209.0) scale(0.992)"/><use href="#p1" transform="translate(276.0 211.0) scale(0.992)"/><use href="#p1" transform="translate(262.0 192.0) scale(0.992)"/><use href="#p1" transform="translate(256.0 193.0) scale(0.992)"/><use href="#p1" transform="translate(230.6 232.1) scale(0.992)"/><use href="#p3" transform="translate(246.5 240.1) scale(0.992)"/><use href="#p0" transform="translate(273.5 242.1) scale(0.992)"/><use href="#p1" transform="translate(294.7 243.1) scale(0.992)"/><use href="#p0" transform="translate(235.6 260.0) scale(0.992)"/><use href="#p3" transform="translate(216.0 266.4) scale(0.992)"/><use href="#p1" transform="translate(303.7 215.6) scale(0.992)"/><use href="#p1" transform="translate(300.2 225.8) scale(0.992)"/><use href="#p1" transform="translate(306.2 227.3) scale(0.992)"/><use href="#p1" transform="translate(304.7 232.6) scale(0.992)"/><use href="#p1" transform="translate(307.7 234.6) scale(0.992)"/><use href="#p1" transform="translate(301.7 234.8) scale(0.992)"/><use href="#p1" transform="translate(318.6 208.8) scale(0.992)"/><use href="#p1" transform="translate(321.8 212.8) scale(0.992)"/><use href="#p1" transform="translate(327.3 212.8) scale(0.992)"/><use href="#p1" transform="translate(325.9 237.1) scale(0.992)"/><use href="#p1" transform="translate(331.1 244.2) scale(0.992)"/><use href="#p1" transform="translate(336.1 246.5) scale(0.992)"/><use href="#p1" transform="translate(341.2 255.1) scale(0.992)"/><use href="#p1" transform="translate(320.2 248.2) scale(0.992)"/><use href="#p1" transform="translate(418.5 151.4) scale(0.992)"/><use href="#p1" transform="translate(360.9 194.4) scale(0.992)"/><use href="#p0" transform="translate(373.5 211.0) scale(0.992)"/><use href="#p2" transform="translate(425.6 222.5) scale(0.992)"/><use href="#p1" transform="translate(468.4 222.5) scale(0.992)"/><use href="#p1" transform="translate(486.3 222.1) scale(1.2)"/><use href="#p1" transform="translate(363.6 237.5) scale(0.992)"/><use href="#p5" transform="translate(383.2 251.2) scale(1.4)"/><use href="#p3" transform="translate(390.4 239.5) scale(0.992)"/><use href="#p1" transform="translate(401.9 248.3) scale(0.992)"/><use href="#p2" transform="translate(412.8 253.2) scale(0.992)"/><use href="#p1" transform="translate(443.5 251.5) scale(0.992)"/><use href="#p1" transform="translate(420.6 264.3) scale(0.992)"/><use href="#p1" transform="translate(432.9 262.7) scale(0.992)"/><use href="#p0" transform="translate(427.8 269.5) scale(0.992)"/><use href="#p1" transform="translate(457.0 263.3) scale(0.992)"/><use href="#p1" transform="translate(425.8 289.6) scale(1.1)"/><use href="#p1" transform="translate(444.9 284.1) scale(0.992)"/><use href="#p1" transform="translate(444.0 292.5) scale(0.992)"/><use href="#p1" transform="translate(384.7 278.7) scale(0.992)"/><use href="#p2" transform="translate(231.1 278.5) scale(0.992)"/><use href="#p1" transform="translate(239.1 277.7) scale(0.992)"/><use href="#p1" transform="translate(244.1 276.7) scale(0.992)"/><use href="#p1" transform="translate(255.7 275.1) scale(0.992)"/><use href="#p4" transform="translate(264.2 282.1) scale(0.992)"/><use href="#p0" transform="translate(311.7 276.5) scale(0.992)"/><use href="#p0" transform="translate(298.6 289.7) scale(0.992)"/><use href="#p1" transform="translate(308.9 291.1) scale(0.992)"/><use href="#p1" transform="translate(272.6 314.3) scale(0.992)"/><use href="#p0" transform="translate(291.0 316.0) scale(0.992)"/><use href="#p0" transform="translate(294.4 326.1) scale(0.992)"/><use href="#p0" transform="translate(304.8 323.1) scale(0.992)"/><use href="#p3" transform="translate(272.2 332.2) scale(0.992)"/><use href="#p0" transform="translate(283.8 332.2) scale(0.992)"/><use href="#p1" transform="translate(286.2 346.1) scale(0.992)"/><use href="#p1" transform="translate(343.7 329.0) scale(0.992)"/><use href="#p1" transform="translate(443.5 251.5) scale(0.992)"/><use href="#p1" transform="translate(444.9 284.1) scale(0.992)"/><use href="#p1" transform="translate(444.0 292.5) scale(0.992)"/><use href="#p1" transform="translate(480.0 337.2) scale(0.992)"/><use href="#p1" transform="translate(544.1 378.6) scale(0.992)"/></g>
  <!-- zoom buttons -->
  <circle cx="570.3" cy="85" r="10.6" fill="#fff" stroke="#333" stroke-width="1"/>
  <path d="M564.3 85h12M570.3 79v12" stroke="#333" stroke-width="1.1" fill="none"/>
  <circle cx="570.3" cy="119.8" r="10.6" fill="#fff" fill-opacity=".96" stroke="#c9ccd1" stroke-width="1"/>
  <path d="M564.3 119.8h12" stroke="#c4c7cc" stroke-width="1.1" fill="none"/>
  <!-- bing -->
  <path d="M6.3 430.6l2 .7v7l3.2-1.8-1.6-.8-.9-2.3 4.3 1.5v2.2l-5 2.9-2-1.1z" fill="#111"/>
  <text x="16" y="440" font-family="Liberation Sans, sans-serif" font-size="9" fill="#222">Bing</text>
  <text x="494.3" y="442.3" font-family="Liberation Sans, sans-serif" font-size="5.6" fill="#3c3c3c">© 2019 Microsoft Corporation</text>
  <text x="570.9" y="442.3" font-family="Liberation Sans, sans-serif" font-size="5.6" fill="#3a62b3" text-decoration="underline">Terms</text>
</svg>

<!-- summary panel -->
<div class="abs" id="sumpanel"></div>
<svg class="abs" style="left:612px;top:69px" width="181" height="146" viewBox="612 69 181 146">
  <g id="donut"></g>
  <path d="M703 92.8A49.2 49.2 0 1 1 653.9 145.1L673.8 143.8A29.3 29.3 0 1 0 703 112.7Z" fill="#27a55c"/>
  <path d="M653.9 145.1A49.2 49.2 0 0 1 667.1 108.3L681.6 121.9A29.3 29.3 0 0 0 673.8 143.8Z" fill="#88d57c"/>
  <path d="M667.1 108.3A49.2 49.2 0 0 1 682.1 97.5L690.5 115.5A29.3 29.3 0 0 0 681.6 121.9Z" fill="#f8ba3c"/>
  <path d="M682.1 97.5A49.2 49.2 0 0 1 693.8 93.7L697.5 113.2A29.3 29.3 0 0 0 690.5 115.5Z" fill="#e8800d"/>
  <path d="M693.8 93.7A49.2 49.2 0 0 1 703 92.8L703 112.7A29.3 29.3 0 0 0 697.5 113.2Z" fill="#f5121d"/>
  <g font-family="Liberation Sans, sans-serif" font-size="5.7" fill="#e3e6ea" text-anchor="end" font-weight="bold">
    <text x="675.5" y="92.5">Poor 4%</text>
    <text x="659" y="101.5">Fair 6%</text>
    <text x="645" y="118">Good 13%</text>
    <text x="674.5" y="198">Excellent 74%</text>
  </g>
  <g fill="none" stroke="#7b8693" stroke-width=".7">
    <path d="M678 90.5h7l2.5 4"/><path d="M661.5 99.5h7l2.5 3"/><path d="M647.5 116h7l3 2"/><path d="M677 196h7l1.5-3.5"/>
  </g>
</svg>

<!-- table -->
<div class="t" id="qbc" style="left:615.5px;top:226.5px;font-size:10.6px;transform:scaleX(.94)">Quality by Country</div>
<div class="abs" id="tbl">
  <div class="abs" style="left:0;top:0;width:169px;height:19.9px;background:#3f4f62"></div>
  <div class="t" style="left:3px;top:5.6px;font-size:8.2px;font-weight:bold">Country</div>
  <div class="t" style="left:79.5px;top:5.6px;font-size:8.2px;font-weight:bold;transform:scaleX(.97)">Viewers</div>
  <div class="t" style="left:120px;top:5.6px;font-size:8.2px;font-weight:bold;transform:scaleX(.97)">Avg QoE</div>
  <svg class="abs" style="left:120px;top:13.3px" width="6" height="4"><polygon points="0,0 5.4,0 2.7,3.2" fill="#fff"/></svg>
  <div class="abs" style="left:76.8px;top:0;width:.7px;height:19.9px;background:#34445a"></div>
  <div class="abs" style="left:117.3px;top:0;width:.7px;height:19.9px;background:#34445a"></div>
  <div class="row" style="top:20.0px;height:13.4px"><div class="c1" style="">Paraguay</div><div class="c2">27</div><div class="c3" style="background:rgb(40,166,90)">4.96</div></div><div class="row" style="top:33.4px;height:13.4px"><div class="c1" style="">Guernsey</div><div class="c2">14</div><div class="c3" style="background:rgb(44,167,90)">4.93</div></div><div class="row" style="top:46.8px;height:13.4px"><div class="c1" style="">Martinique</div><div class="c2">13</div><div class="c3" style="background:rgb(46,167,90)">4.92</div></div><div class="row" style="top:60.2px;height:13.5px"><div class="c1" style="">Lithuania</div><div class="c2">228</div><div class="c3" style="background:rgb(71,173,89)">4.74</div></div><div class="row" style="top:73.7px;height:13.3px"><div class="c1" style="">Trinidad and Tobago</div><div class="c2">167</div><div class="c3" style="background:rgb(72,174,89)">4.73</div></div><div class="row" style="top:87.0px;height:13.3px"><div class="c1" style="">Panama</div><div class="c2">194</div><div class="c3" style="background:rgb(73,174,89)">4.72</div></div><div class="row" style="top:100.3px;height:13.9px"><div class="c1" style="">Iceland</div><div class="c2">168</div><div class="c3" style="background:rgb(79,175,88)">4.68</div></div><div class="row" style="top:114.2px;height:22.4px"><div class="c1" style="line-height:9.4px;padding-top:1.8px">Bolivia (Plurinational<br>State of)</div><div class="c2">109</div><div class="c3" style="background:rgb(82,176,88)">4.66</div></div><div class="row" style="top:136.6px;height:13.9px"><div class="c1" style="">Brunei Darussalam</div><div class="c2">32</div><div class="c3" style="background:rgb(82,176,88)">4.66</div></div><div class="row" style="top:150.5px;height:13.4px"><div class="c1" style="">Puerto Rico</div><div class="c2">1711</div><div class="c3" style="background:rgb(83,176,88)">4.65</div></div><div class="row" style="top:163.9px;height:13.6px"><div class="c1" style="">Cambodia</div><div class="c2">17</div><div class="c3" style="background:rgb(83,176,88)">4.65</div></div><div class="row" style="top:177.5px;height:13.7px"><div class="c1" style="">Belarus</div><div class="c2">284</div><div class="c3" style="background:rgb(86,177,88)">4.63</div></div><div class="row" style="top:192.2px;height:13px;font-weight:bold"><div class="c1" style="color:#222;border-top:none;font-size:7.8px">Total</div><div class="c2" style="border-top:none;font-size:7.8px">1725842</div><div class="c3" style="background:#202d3f;border-top:none;font-size:7.8px">4.50</div></div>
  <!-- scrollbar -->
  <div class="abs" style="left:169.3px;top:0;width:6.2px;height:192px;background:#f1f1f1"></div>
  <div class="abs" style="left:169.3px;top:16.5px;width:6.2px;height:15.8px;background:#c6c9cd"></div>
  <svg class="abs" style="left:169px;top:5px" width="7" height="6" viewBox="0 0 7 6"><polyline points="1.4,4.2 3.2,2.2 5,4.2" fill="none" stroke="#444" stroke-width=".8"/></svg>
  <svg class="abs" style="left:169px;top:186.5px" width="7" height="6" viewBox="0 0 7 6"><polyline points="1.4,1.8 3.2,3.8 5,1.8" fill="none" stroke="#444" stroke-width=".8"/></svg>
</div>
</body>
</html>
